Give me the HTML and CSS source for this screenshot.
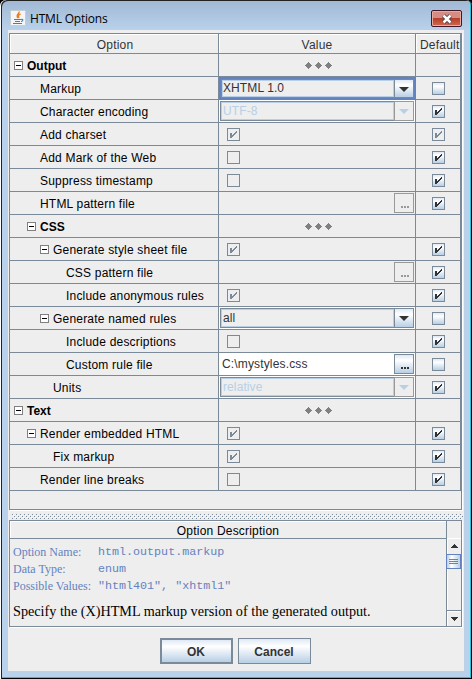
FILE: index.html
```html
<!DOCTYPE html>
<html lang="en">
<head>
<meta charset="utf-8">
<title>HTML Options</title>
<link rel="stylesheet" href="styles.css">
</head>
<body>
<div class="window">
  <header class="titlebar">
    <svg class="java" width="16" height="16" viewBox="0 0 16 16"><rect x=".5" y=".5" width="15" height="15" rx="1" fill="#f3f5f6" stroke="#c6ced4"/><path d="M9 1.5c1 2.5-4 3-1 6.5M10.5 4c-2.5 1-2.5 2-1.5 4" fill="none" stroke="#ed7d24" stroke-width="1.4"/><path d="M4 9.5h7M5 11.5h5M3 13.5h9M11 9.5c3-1 2 2 0 2" fill="none" stroke="#557c9b" stroke-width="1.1"/></svg>
    <span class="title">HTML Options</span>
    <span class="close"><svg width="12" height="10" viewBox="0 0 12 10"><path d="M2.5 1.5l7 7M9.5 1.5l-7 7" stroke="#3f3f4b" stroke-width="4.2"/><path d="M2.5 1.5l7 7M9.5 1.5l-7 7" stroke="#fff" stroke-width="2.5"/></svg></span>
  </header>
  <main class="content">
    <div class="table" id="table">
      <div class="row head"><div class="cell">Option</div><div class="cell">Value</div><div class="cell">Default</div></div>
    </div>
    <div class="divider"><svg width="451" height="5"><defs><pattern id="d" width="4" height="4" patternUnits="userSpaceOnUse"><path d="M0 0h1v1h-1zM2 2h1v1h-1z" fill="#7a8a99"/><path d="M1 1h1v1h-1zM3 3h1v1h-1z" fill="#fff"/></pattern></defs><rect width="451" height="5" fill="url(#d)"/></svg></div>
    <section class="desc">
      <div class="main">
        <div class="desc-title">Option Description</div>
        <div class="info">
          <span>Option Name:</span><code>html.output.markup</code>
          <span>Data Type:</span><code>enum</code>
          <span>Possible Values:</span><code>"html401", "xhtml1"</code>
        </div>
        <p class="text">Specify the (X)HTML markup version of the generated output.</p>
      </div>
      <div class="scroll">
        <div class="corner"></div>
        <div class="arrow"><svg width="9" height="4" shape-rendering="crispEdges"><path d="M4 0h1v1h1v1h1v1h1v1h-7v-1h1v-1h1v-1h1z" fill="#333"/></svg></div>
        <div class="track"><div class="thumb"><i></i><i></i><i></i></div></div>
        <div class="arrow down"><svg width="9" height="4" shape-rendering="crispEdges"><path d="M1 0h7v1h-1v1h-1v1h-1v1h-1v-1h-1v-1h-1v-1h-1z" fill="#333"/></svg></div>
      </div>
    </section>
    <div class="buttons"><button class="ok">OK</button><button>Cancel</button></div>
  </main>
</div>
<script src="rows.js"></script>
</body>
</html>
```
FILE: styles.css
```css
* { box-sizing: border-box; }
body { margin: 0; background: #000; overflow: hidden; font: 12px/14px "Liberation Sans", Arial, sans-serif; color: #000; }
.window { width: 472px; height: 679px; padding: 2px 8px 8px; border-radius: 6px 6px 0 0; background: linear-gradient(#a0b8d3, #b9d1ea 30px); box-shadow: inset 1px 0 #fff, inset 2px 1px #222, inset -1px -1px #000, inset -2px -2px #25c4dd; }
.titlebar { display: flex; align-items: flex-start; height: 28px; }
.java { flex: none; margin: 8px 0 0 2px; }
.title { flex: 1; margin: 9px 0 0 4px; font: 12px/16px "Open Sans", "Noto Sans", sans-serif; letter-spacing: -.2px; }
.close { display: flex; align-items: center; justify-content: center; width: 31px; height: 17px; margin: 8px 2px 0 0; border: 1px solid #43172a; border-radius: 2px; box-shadow: inset 0 0 0 1px #e9aaa0; background: linear-gradient(#d58d83 48%, #b93e28 50%, #cc6b52); }
.content { width: 456px; height: 641px; padding: 3px 1px 0; background: #eee; }
.table { width: 453px; height: 477px; border: 1px solid #7a8a99; box-shadow: 1px 1px #fff; }
.row { display: grid; grid-template-columns: 209px 197px 45px; grid-template-rows: 100%; height: 23px; }
.cell { display: flex; align-items: center; border-right: 1px solid #7a8a99; border-bottom: 1px solid #7a8a99; padding-top: 1px; white-space: nowrap; overflow: hidden; letter-spacing: .2px; }
.head { height: 20px; color: #333; }
.head .cell { justify-content: center; box-shadow: inset 1px 1px #fff; padding-top: 2px; }
.head .cell:first-child { padding-left: 2px; }
.head .cell:last-child { justify-content: flex-start; padding-left: 4px; }
.name { padding-left: 4px; }
.l1 { padding-left: 17px; }
.l2 { padding-left: 30px; }
.l3 { padding-left: 43px; }
.l4 { padding-left: 56px; }
.bold { font-weight: bold; letter-spacing: 0; }
.toggle { display: flex; flex: none; align-items: center; width: 9px; height: 9px; margin-right: 4px; border: 1px solid #808080; background: #fff; padding: 0 1px; }
.toggle::after { content: ""; width: 5px; height: 1px; background: #000; }
.default { justify-content: center; padding-left: 1px; }
.value { padding-left: 8px; }
.check { flex: none; width: 13px; height: 13px; border: 1px solid #7a8a99; }
.check.on { background: linear-gradient(#dfe9f4, #fff 30%, #b8cfe5); }
.check svg { display: block; margin: 2px; }
.section { justify-content: center; gap: 3px; padding: 1px 0 0 3px; }
.value.combo { padding: 1px; background: #fff; align-items: stretch; }
.field { flex: 1; border: 1px solid #7a8a99; border-right: 0; background: #eee; box-shadow: inset 0 0 0 1px #b8cfe5; padding: 2px 2px; font-size: 12px; line-height: 15px; letter-spacing: .1px; color: #333; }
.drop { display: flex; align-items: center; justify-content: center; width: 20px; border: 1px solid #7a8a99; background: linear-gradient(#dfe9f4, #fff 30%, #b8cfe5); padding-top: 1px; }
.off .field { color: #b8cfe5; }
.off .drop { border-color: #999; background: #eee; }
.value.focus { padding: 0; border: 2px solid #6382bf; }
.focus .field { padding: 1px 1px; }
.value.file { padding: 0 1px 0 3px; justify-content: space-between; letter-spacing: .15px; color: #333; }
.value.edit { background: #fff; }
.more { width: 20px; height: 20px; border: 1px solid #7a8a99; background: linear-gradient(#dfe9f4, #fff 30%, #b8cfe5); display: flex; align-items: flex-end; justify-content: center; padding: 0 0 4px 1px; }
.more svg { display: block; }
.more.gray { border-color: #999; background: #eee; }
.divider { height: 10px; padding: 4px 0 0 3px; }
.divider svg { display: block; }
.desc { display: flex; width: 453px; height: 107px; border: 1px solid #7a8a99; box-shadow: 1px 1px #fff; }
.main { flex: 1; }
.desc-title { height: 18px; padding-top: 3px; text-align: center; letter-spacing: .2px; border-bottom: 1px solid #7a8a99; box-shadow: inset 1px 1px #fff; }
.info { display: grid; grid-template-columns: 85px 1fr; grid-auto-rows: 17px; padding: 5px 0 0 3px; color: #6382bf; font: 12px/17px "Liberation Serif", serif; }
.info code { font: 11.7px/16px "Liberation Mono", monospace; }
.text { margin: 7px 0 0 3px; font: 14.2px/18px "Liberation Serif", serif; white-space: nowrap; }
.scroll { width: 15px; border-left: 1px solid #7a8a99; display: flex; flex-direction: column; }
.corner { height: 17px; }
.arrow { height: 16px; display: flex; align-items: center; justify-content: center; box-shadow: inset 1px 1px #fff; }
.track { flex: 1; box-shadow: inset 1px 0 #fff; }
.thumb { width: 15px; height: 15px; margin-left: -1px; border: 1px solid #6382bf; background: linear-gradient(90deg, #b8cfe5, #fff 35%, #b8cfe5); padding: 4px 2px; display: grid; gap: 1px; grid-auto-rows: 1px; }
.thumb i { background: #6382bf; }
.down { border-top: 1px solid #7a8a99; }
.buttons { display: flex; justify-content: center; gap: 5px; padding: 11px 2px 0 0; }
button { width: 73px; height: 26px; margin: 0; padding: 1px 0 0; border: 1px solid #7a8a99; background: linear-gradient(#dfe9f4, #fff 30%, #b8cfe5); color: #333; font: bold 12px/14px "Liberation Sans", Arial, sans-serif; }
.ok { border-width: 2px; }
```
FILE: rows.js
```js
const rows = [
  [0, 'Output', 'section', '', '', true],
  [2, 'Markup', 'combo focus', 'XHTML 1.0', 'off'],
  [2, 'Character encoding', 'combo off', 'UTF-8', 'on'],
  [2, 'Add charset', 'flag', true, 'gray'],
  [2, 'Add Mark of the Web', 'flag', false, 'on'],
  [2, 'Suppress timestamp', 'flag', false, 'on'],
  [2, 'HTML pattern file', 'file', '', 'on'],
  [1, 'CSS', 'section', '', '', true],
  [2, 'Generate style sheet file', 'flag', true, 'on', true],
  [4, 'CSS pattern file', 'file', '', 'on'],
  [4, 'Include anonymous rules', 'flag', true, 'on'],
  [2, 'Generate named rules', 'combo', 'all', 'off', true],
  [4, 'Include descriptions', 'flag', false, 'on'],
  [4, 'Custom rule file', 'file edit', 'C:\\mystyles.css', 'off'],
  [3, 'Units', 'combo off', 'relative', 'on'],
  [0, 'Text', 'section', '', '', true],
  [1, 'Render embedded HTML', 'flag', true, 'on', true],
  [3, 'Fix markup', 'flag', true, 'on'],
  [2, 'Render line breaks', 'flag', false, 'on']
];
const tick = c => `<svg width="7" height="7" shape-rendering="crispEdges"><path d="M0 2h2v5h-2zM6 0h1v2h-1zM5 1h1v2h-1zM4 2h1v2h-1zM3 3h1v2h-1zM2 4h1v2h-1z" fill="${c}"/></svg>`;
const check = (ticked, active) => `<span class="check ${active ? 'on' : ''}">${ticked ? tick(active ? '#333' : '#7a8a99') : ''}</span>`;
const diamond = '<svg width="7" height="7" shape-rendering="crispEdges"><path d="M3 0h1v1h1v1h1v1h1v1h-1v1h-1v1h-1v1h-1v-1h-1v-1h-1v-1h-1v-1h1v-1h1v-1h1z" fill="#808080"/></svg>';
function value(type, v) {
  if (type === 'section') return diamond.repeat(3);
  if (type === 'flag') return check(v, false);
  if (type.startsWith('combo')) {
    const color = type.includes('off') ? '#b8cfe5' : '#333';
    return `<span class="field">${v}</span><span class="drop"><svg width="10" height="5"><path d="M0 0h10l-5 5z" fill="${color}"/></svg></span>`;
  }
  const edit = type.includes('edit');
  return `<span>${v}</span><span class="more ${edit ? '' : 'gray'}"><svg width="8" height="2" shape-rendering="crispEdges"><path d="M0 0h2v2h-2zM3 0h2v2h-2zM6 0h2v2h-2z" fill="${edit ? '#333' : '#999'}"/></svg></span>`;
}
document.getElementById('table').insertAdjacentHTML('beforeend', rows.map(([level, name, type, v, def, toggle]) => `
<div class="row"><div class="cell name l${level} ${type === 'section' ? 'bold' : ''}">${toggle ? '<span class="toggle"></span>' : ''}${name}</div><div class="cell value ${type}">${value(type, v)}</div><div class="cell default">${type === 'section' ? '' : check(def !== 'off', def !== 'gray')}</div></div>`).join(''));
```
